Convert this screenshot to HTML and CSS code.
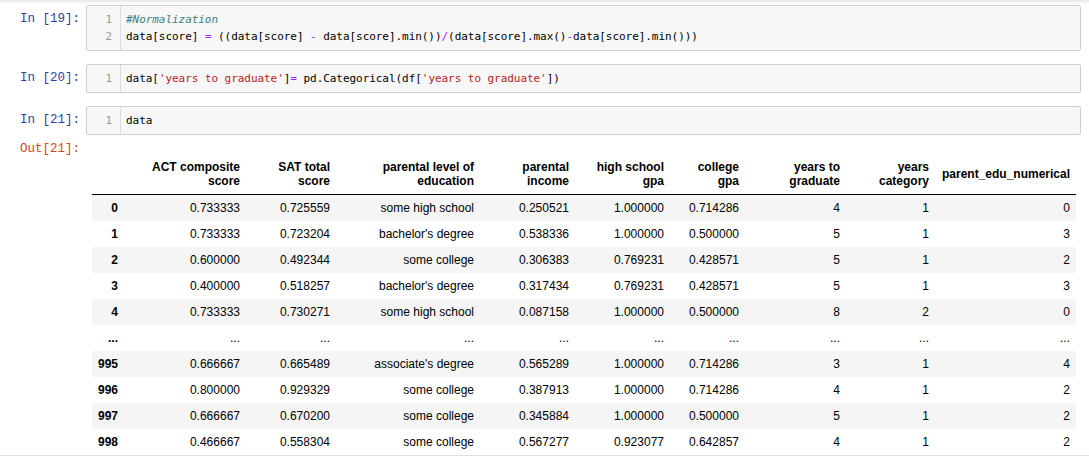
FILE: index.html
```html
<!DOCTYPE html>
<html>
<head>
<meta charset="utf-8">
<link rel="stylesheet" href="styles.css">
</head>
<body>
<div class="notebook">
  <div class="cell">
    <div class="prompt">In&nbsp;[19]:</div>
    <div class="input-area">
      <div class="gutter"><div>1</div><div>2</div></div>
<pre class="code"><span class="cm">#Normalization</span>
data[score] <span class="op">=</span> ((data[score] <span class="op">-</span> data[score].min())<span class="op">/</span>(data[score].max()<span class="op">-</span>data[score].min()))</pre>
    </div>
  </div>
  <div class="cell">
    <div class="prompt">In&nbsp;[20]:</div>
    <div class="input-area">
      <div class="gutter"><div>1</div></div>
<pre class="code">data[<span class="str">'years to graduate'</span>]<span class="op">=</span> pd.Categorical(df[<span class="str">'years to graduate'</span>])</pre>
    </div>
  </div>
  <div class="cell-group">
    <div class="cell">
      <div class="prompt">In&nbsp;[21]:</div>
      <div class="input-area">
        <div class="gutter"><div>1</div></div>
<pre class="code">data</pre>
      </div>
    </div>
    <div class="cell">
      <div class="prompt out">Out[21]:</div>
      <div class="output-area">
        <table class="df">
          <colgroup>
            <col class="w-idx"><col class="w-act"><col class="w-sat"><col class="w-edu"><col class="w-inc"><col class="w-hs"><col class="w-col"><col class="w-ytg"><col class="w-yc"><col class="w-pen">
          </colgroup>
          <thead>
            <tr><th></th><th>ACT composite score</th><th>SAT total score</th><th>parental level of education</th><th>parental income</th><th>high school gpa</th><th>college gpa</th><th>years to graduate</th><th>years category</th><th>parent_edu_numerical</th></tr>
          </thead>
          <tbody>
            <tr><th>0</th><td>0.733333</td><td>0.725559</td><td>some high school</td><td>0.250521</td><td>1.000000</td><td>0.714286</td><td>4</td><td>1</td><td>0</td></tr>
            <tr><th>1</th><td>0.733333</td><td>0.723204</td><td>bachelor's degree</td><td>0.538336</td><td>1.000000</td><td>0.500000</td><td>5</td><td>1</td><td>3</td></tr>
            <tr><th>2</th><td>0.600000</td><td>0.492344</td><td>some college</td><td>0.306383</td><td>0.769231</td><td>0.428571</td><td>5</td><td>1</td><td>2</td></tr>
            <tr><th>3</th><td>0.400000</td><td>0.518257</td><td>bachelor's degree</td><td>0.317434</td><td>0.769231</td><td>0.428571</td><td>5</td><td>1</td><td>3</td></tr>
            <tr><th>4</th><td>0.733333</td><td>0.730271</td><td>some high school</td><td>0.087158</td><td>1.000000</td><td>0.500000</td><td>8</td><td>2</td><td>0</td></tr>
            <tr><th>...</th><td>...</td><td>...</td><td>...</td><td>...</td><td>...</td><td>...</td><td>...</td><td>...</td><td>...</td></tr>
            <tr><th>995</th><td>0.666667</td><td>0.665489</td><td>associate's degree</td><td>0.565289</td><td>1.000000</td><td>0.714286</td><td>3</td><td>1</td><td>4</td></tr>
            <tr><th>996</th><td>0.800000</td><td>0.929329</td><td>some college</td><td>0.387913</td><td>1.000000</td><td>0.714286</td><td>4</td><td>1</td><td>2</td></tr>
            <tr><th>997</th><td>0.666667</td><td>0.670200</td><td>some college</td><td>0.345884</td><td>1.000000</td><td>0.500000</td><td>5</td><td>1</td><td>2</td></tr>
            <tr><th>998</th><td>0.466667</td><td>0.558304</td><td>some college</td><td>0.567277</td><td>0.923077</td><td>0.642857</td><td>4</td><td>1</td><td>2</td></tr>
          </tbody>
        </table>
      </div>
    </div>
  </div>
</div>
<div class="bottom-rule"></div>
</body>
</html>
```

FILE: styles.css
```css
html, body {
  margin: 0;
  padding: 0;
}
body {
  background: #fff linear-gradient(#e6e6e6, #ffffff 4px) no-repeat;
  overflow: hidden;
  font-family: "Liberation Sans", Arial, sans-serif;
}
.notebook {
  display: flex;
  flex-direction: column;
  gap: 13px;
  padding-top: 5px;
}
.cell-group {
  display: flex;
  flex-direction: column;
  gap: 5px;
}
.cell {
  display: flex;
  align-items: flex-start;
}
.prompt {
  flex: none;
  width: 86px;
  box-sizing: border-box;
  padding: 6px 6px 0 0;
  text-align: right;
  font-family: "Liberation Mono", monospace;
  font-size: 12.5px;
  line-height: 17px;
  color: #303f9f;
}
.prompt.out {
  color: #d84315;
  padding-top: 1px;
}
.input-area {
  flex: none;
  width: 995px;
  box-sizing: border-box;
  display: flex;
  border: 1px solid #cfcfcf;
  border-radius: 2px;
  background: #f7f7f7;
  font-family: "DejaVu Sans Mono", "Liberation Mono", monospace;
  font-size: 11px;
  line-height: 17px;
}
.gutter {
  flex: none;
  width: 34px;
  box-sizing: border-box;
  padding: 5px 8px 5px 0;
  border-right: 1px solid #dddddd;
  text-align: right;
  color: #999999;
}
.code {
  margin: 0;
  padding: 5px 0 5px 5px;
  font: inherit;
  letter-spacing: -0.05px;
  color: #000;
  white-space: pre;
}
.cm { color: #408080; font-style: italic; }
.op { color: #aa22ff; }
.str { color: #ba2121; }

.output-area {
  padding: 14px 0 0 6px;
}
.df {
  border-collapse: collapse;
  table-layout: fixed;
  width: 984px;
  font-family: "Liberation Sans", Arial, sans-serif;
  font-size: 12px;
  color: #000;
}
.df th, .df td {
  padding: 6px;
  text-align: right;
  vertical-align: middle;
  line-height: normal;
  border: none;
}
.df thead th {
  font-weight: bold;
  border-bottom: 1px solid #000;
}
.df tbody th {
  font-weight: bold;
}
.df tbody tr:nth-child(odd) {
  background: #f5f5f5;
}
.w-idx { width: 32px; }
.w-act { width: 122px; }
.w-sat { width: 90px; }
.w-edu { width: 144px; }
.w-inc { width: 95px; }
.w-hs { width: 95px; }
.w-col { width: 75px; }
.w-ytg { width: 101px; }
.w-yc { width: 89px; }
.w-pen { width: 141px; }

.bottom-rule {
  height: 2px;
  background: #e0e0e0;
}
```
